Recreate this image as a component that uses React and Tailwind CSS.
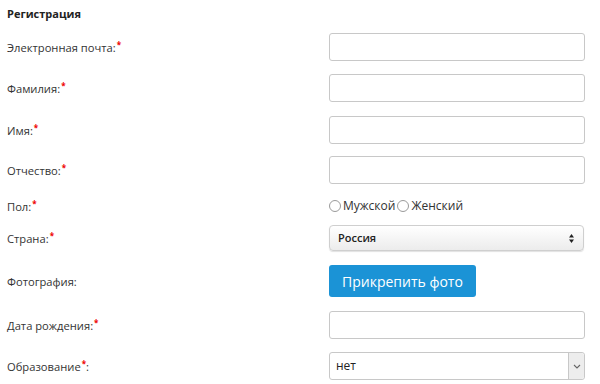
import React from "react";

const font = { fontFamily: '"Open Sans", "Noto Sans", sans-serif' };

function Star() {
    return <span className="relative -top-[4px] ml-[1px] text-[8px] font-bold text-[#e00]">*</span>;
}

function Label({ text, starInside = false }) {
    return (
        <div className="w-[322px] shrink-0 pt-[2px] text-[11.2px] text-[#333]">
            {starInside ? (
                <>
                    {text}
                    <Star />:
                </>
            ) : (
                <>
                    {text}:
                    <Star />
                </>
            )}
        </div>
    );
}

function TextInput() {
    return <div className="w-[256px] h-[28px] rounded-[3px] border border-[#c8c8c8] bg-white" />;
}

function Radio({ label }) {
    return (
        <label className="flex items-center gap-[2px] text-[12px] text-[#333]">
            <span className="w-[12px] h-[12px] rounded-full border border-[#9a9a9a] bg-white" />
            {label}
        </label>
    );
}

export default function App() {
    return (
        <div className="w-[600px] h-[384px] bg-white pl-[7px] overflow-hidden" style={font}>
            <div className="pt-[6px] text-[11px] font-bold text-[#222] leading-[16px]">Регистрация</div>

            <div className="flex flex-col">
                <div className="flex items-center h-[28px] mt-[11px]">
                    <Label text="Электронная почта" />
                    <TextInput />
                </div>
                <div className="flex items-center h-[28px] mt-[13px]">
                    <Label text="Фамилия" />
                    <TextInput />
                </div>
                <div className="flex items-center h-[28px] mt-[14px]">
                    <Label text="Имя" />
                    <TextInput />
                </div>
                <div className="flex items-center h-[28px] mt-[12px]">
                    <Label text="Отчество" />
                    <TextInput />
                </div>
                <div className="flex items-center h-[20px] mt-[12px]">
                    <Label text="Пол" />
                    <div className="flex items-center gap-[2px]">
                        <Radio label="Мужской" />
                        <Radio label="Женский" />
                    </div>
                </div>
                <div className="flex items-center h-[26px] mt-[9px]">
                    <Label text="Страна" />
                    <div className="w-[255px] h-[26px] rounded-[4px] border border-[#cfcfcf] bg-gradient-to-b from-white to-[#ececec] shadow-[0_1px_1px_rgba(0,0,0,0.12)] flex items-center justify-between px-[8px]">
                        <span className="text-[11px] font-semibold text-[#222]">Россия</span>
                        <svg width="7" height="11" viewBox="0 0 7 11">
                            <path d="M3.5 1 L6 4.5 H1 Z" fill="#222" />
                            <path d="M3.5 10 L6 6.5 H1 Z" fill="#222" />
                        </svg>
                    </div>
                </div>
                <div className="flex items-center h-[32px] mt-[14px]">
                    <div className="w-[322px] shrink-0 pt-[2px] text-[11.2px] text-[#333]">Фотография:</div>
                    <button className="h-[32px] px-[13px] rounded-[3px] bg-[#1b93d6] text-white text-[14px]">
                        Прикрепить фото
                    </button>
                </div>
                <div className="flex items-center h-[28px] mt-[14px]">
                    <Label text="Дата рождения" />
                    <TextInput />
                </div>
                <div className="flex items-center h-[28px] mt-[13px]">
                    <Label text="Образование" starInside />
                    <div className="w-[256px] h-[28px] rounded-[3px] border border-[#c8c8c8] bg-white flex items-center justify-between">
                        <span className="pl-[6px] text-[12px] text-[#222]">нет</span>
                        <div className="w-[16px] h-full bg-[#ededed] border-l border-[#c8c8c8] flex items-center justify-center rounded-r-[3px]">
                            <svg width="8" height="5" viewBox="0 0 8 5">
                                <path d="M1 1 L4 4 L7 1" stroke="#666" strokeWidth="1.1" fill="none" />
                            </svg>
                        </div>
                    </div>
                </div>
            </div>
        </div>
    );
}
